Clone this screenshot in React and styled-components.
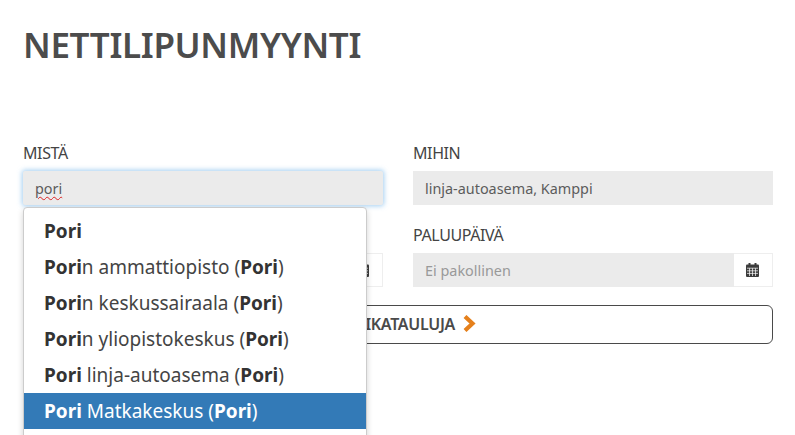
import React from 'react';
import styled, {createGlobalStyle} from 'styled-components';

const Global=createGlobalStyle`
    html,body{
        margin:0;
        padding:0;
        background:#fff;
        overflow:hidden;
    }
    body{
        font-family:"Noto Sans","Open Sans",sans-serif;
        color:#4a4a4a;
    }
`;
const Page=styled.div`
    width:795px;
    height:435px;
    box-sizing:border-box;
    padding:24px 22px 0 23px;
    overflow:hidden;
`;
const Title=styled.h1`
    margin:0 0 75px;
    font-size:35px;
    line-height:42px;
    font-weight:600;
    letter-spacing:-.35px;
    color:#4c4c4c;
`;
const Form=styled.div`
    position:relative;
    display:grid;
    grid-template-columns:360px 360px;
    column-gap:30px;
    row-gap:18px;
`;
const Field=styled.div`
    display:flex;
    flex-direction:column;
`;
const Label=styled.div`
    font-size:16px;
    line-height:24px;
    height:24px;
    margin-bottom:6px;
    letter-spacing:-.4px;
    color:#444;
`;
const Input=styled.div`
    height:34px;
    box-sizing:border-box;
    padding:0 12px;
    display:flex;
    align-items:center;
    flex-grow:${({$grow})=>$grow?1:0};
    background:#ebebeb;
    font-size:14.4px;
    color:${({$muted})=>$muted?'#999':'#5c5c5c'};
    box-shadow:${({$focus})=>$focus?'0 0 5px 1px rgba(102,175,233,.6)':'none'};
    border-radius:${({$focus})=>$focus?'2px':'0'};
`;
const Spell=styled.span`
    text-decoration:underline wavy #d22;
    text-decoration-thickness:1px;
    text-underline-offset:2px;
`;
const InputGroup=styled.div`
    display:flex;
`;
const Addon=styled.div`
    width:39px;
    height:34px;
    box-sizing:border-box;
    padding-right:2px;
    display:flex;
    align-items:center;
    justify-content:center;
    border:1px solid #eee;
    border-left:none;
    color:#3c3c3c;
`;
const SubmitButton=styled.button`
    grid-column:1 / 3;
    height:39px;
    padding:0 0 2px;
    display:flex;
    align-items:center;
    justify-content:center;
    gap:8px;
    box-sizing:border-box;
    background:#fff;
    border:1px solid #4a4a4a;
    border-radius:6px;
    font-family:inherit;
    font-size:16px;
    font-weight:600;
    letter-spacing:-.3px;
    color:#4a4a4a;
`;
const Menu=styled.ul`
    position:absolute;
    top:66px;
    left:0;
    width:344px;
    height:240px;
    box-sizing:border-box;
    margin:0;
    padding:5px 0 0 1px;
    list-style:none;
    background:#fff;
    border:1px solid #ccc;
    border-radius:4px;
    box-shadow:0 3px 6px rgba(0,0,0,.18);
`;
const MenuItem=styled.li`
    height:36px;
    margin-left:-1px;
    padding-left:20px;
    display:flex;
    align-items:center;
    white-space:pre;
    font-size:19px;
    color:${({$active})=>$active?'#fff':'#444'};
    background:${({$active})=>$active?'#337ab7':'transparent'};
    b{
        font-weight:700;
        color:${({$active})=>$active?'#fff':'#333'};
    }
`;

const CalendarIcon=()=>(
    <svg width="13" height="14" viewBox="0 0 13 14" fill="currentColor">
        <rect x="2.5" y="0" width="2" height="3"/>
        <rect x="8.5" y="0" width="2" height="3"/>
        <rect x="0" y="1.5" width="13" height="12.5" rx="1"/>
        <g stroke="#fff" strokeWidth=".7" fill="none">
            <path d="M1 5.2H12M1 7.8H12M1 10.4H12"/>
            <path d="M3.5 5.2V13M6.5 5.2V13M9.5 5.2V13"/>
        </g>
    </svg>
);

const ChevronIcon=()=>(
    <svg width="13" height="17" viewBox="0 0 13 17" fill="none" stroke="#e5801c" strokeWidth="4.2">
        <path d="M2 1.5L9.5 8.5L2 15.5"/>
    </svg>
);

export default function App(){
    return (
        <Page>
            <Global/>
            <Title>NETTILIPUNMYYNTI</Title>
            <Form>
                <Field>
                    <Label>MISTÄ</Label>
                    <Input $focus><Spell>pori</Spell></Input>
                </Field>
                <Field>
                    <Label>MIHIN</Label>
                    <Input>linja-autoasema, Kamppi</Input>
                </Field>
                <Field>
                    <Label/>
                    <InputGroup>
                        <Input $grow/>
                        <Addon><CalendarIcon/></Addon>
                    </InputGroup>
                </Field>
                <Field>
                    <Label>PALUUPÄIVÄ</Label>
                    <InputGroup>
                        <Input $grow $muted>Ei pakollinen</Input>
                        <Addon><CalendarIcon/></Addon>
                    </InputGroup>
                </Field>
                <SubmitButton>HAE AIKATAULUJA <ChevronIcon/></SubmitButton>
                <Menu>
                    <MenuItem><b>Pori</b></MenuItem>
                    <MenuItem><b>Pori</b>n ammattiopisto (<b>Pori</b>)</MenuItem>
                    <MenuItem><b>Pori</b>n keskussairaala (<b>Pori</b>)</MenuItem>
                    <MenuItem><b>Pori</b>n yliopistokeskus (<b>Pori</b>)</MenuItem>
                    <MenuItem><b>Pori</b> linja-autoasema (<b>Pori</b>)</MenuItem>
                    <MenuItem $active><b>Pori</b> Matkakeskus (<b>Pori</b>)</MenuItem>
                </Menu>
            </Form>
        </Page>
    );
}
